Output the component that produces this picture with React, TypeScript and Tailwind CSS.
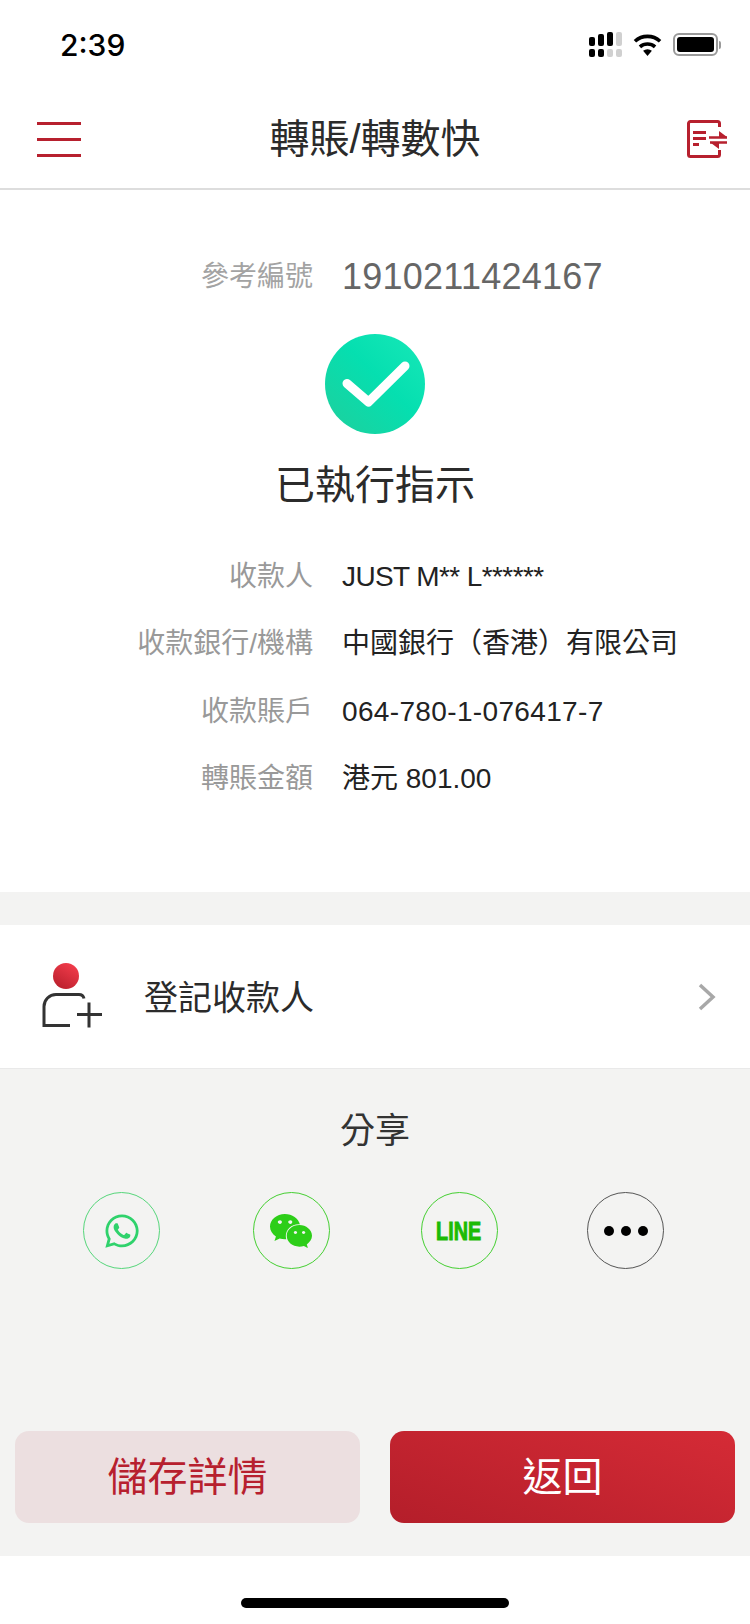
import { FaWhatsapp, FaWeixin } from "react-icons/fa";

const CJK = "font-['Liberation_Sans','Noto_Sans_CJK_TC',sans-serif]";

function Signal() {
  const heights = ["h-[9px]", "h-[12px]", "h-[14px]", "h-[14px]"];
  return (
    <div className="flex h-[25px] w-[33px] flex-col justify-between">
      <div className="flex h-[14px] items-end justify-between">
        {heights.map((h, i) => (
          <span key={i} className={`w-[6px] rounded-[2px] ${h} ${i === 3 ? "bg-[#d0d0d0]" : "bg-black"}`} />
        ))}
      </div>
      <div className="flex h-[8px] justify-between">
        {heights.map((_, i) => (
          <span key={i} className={`h-[8px] w-[6px] rounded-[2px] ${i < 2 ? "bg-black" : "bg-[#d0d0d0]"}`} />
        ))}
      </div>
    </div>
  );
}

function Wifi() {
  return (
    <svg width="31" height="23" viewBox="0 0 31 24">
      <path d="M15.5 24l-4.6-5.4a7 7 0 0 1 9.2 0z" fill="#000" />
      <path d="M7.6 14.4a12 12 0 0 1 15.8 0" fill="none" stroke="#000" strokeWidth="3.8" />
      <path d="M2.4 8.6a19.5 19.5 0 0 1 26.2 0" fill="none" stroke="#000" strokeWidth="3.8" />
    </svg>
  );
}

function Battery() {
  return (
    <div className="flex items-center">
      <div className="flex h-[23px] w-[45px] items-center rounded-[6px] border-2 border-[#9a9a9a] p-[2px]">
        <div className="h-full w-full rounded-[3px] bg-black" />
      </div>
      <div className="ml-[1px] h-[8px] w-[2px] rounded-r-[2px] bg-[#9a9a9a]" />
    </div>
  );
}

function Row({ label, value, tracking }: { label: string; value: string; tracking?: string }) {
  return (
    <div className="flex h-[67.5px] items-center">
      <div className="w-[313px] text-right text-[28px] leading-none text-[#999999]">{label}</div>
      <div className={`ml-[29px] text-[28px] leading-none text-[#222222] ${tracking ?? ""}`}>{value}</div>
    </div>
  );
}

function Circle({ children, border }: { children: React.ReactNode; border: string }) {
  return (
    <div className={`flex h-[77px] w-[77px] items-center justify-center rounded-full border-[1.5px] ${border}`}>
      {children}
    </div>
  );
}

export default function App() {
  return (
    <div className={`flex h-[1624px] w-[750px] flex-col overflow-hidden bg-white ${CJK}`}>
      <div className="flex h-[88px] shrink-0 items-start justify-between pl-[60px] pr-[29px] pt-[27px]">
        <span className="text-[30px] font-medium leading-[36px] text-black [font-family:Inter,sans-serif]">2:39</span>
        <div className="mt-[5px] flex items-center gap-[10px]">
          <Signal />
          <Wifi />
          <Battery />
        </div>
      </div>

      <header className="grid h-[102px] shrink-0 grid-cols-[1fr_auto_1fr] items-center border-b-2 border-[#dddddd] pl-[37px] pr-[23px] pt-[2px]">
        <div className="flex h-[35px] w-[44px] flex-col justify-between">
          <span className="h-[3px] bg-[#b7202e]" />
          <span className="h-[3px] bg-[#b7202e]" />
          <span className="h-[3px] bg-[#b7202e]" />
        </div>
        <h1 className="-translate-x-[7px] text-[40px] font-normal leading-none text-[#2b2b2b]">轉賬/轉數快</h1>
        <svg width="40" height="38" viewBox="0 0 40 38" fill="none" stroke="#b7202e" className="justify-self-end">
          <path d="M32.5 7V3.5A2 2 0 0 0 30.5 1.5H3.5A2 2 0 0 0 1.5 3.5v31a2 2 0 0 0 2 2h27a2 2 0 0 0 2-2V30" strokeWidth="3" />
          <path d="M6 12.5h13M6 18.5h13M6 24.5h6" strokeWidth="3" />
          <path d="M22 17.5h18M23 22.5h17" strokeWidth="2.6" />
          <path d="M32 11l8 6h-8zM32 29l-8-6h8z" fill="#b7202e" stroke="none" />
        </svg>
      </header>

      <main className="flex h-[702px] shrink-0 flex-col">
        <div className="mt-[65px] flex h-[44px] items-center">
          <div className="w-[313px] text-right text-[28px] leading-none text-[#a3a3a3]">參考編號</div>
          <div className="ml-[29px] text-[36px] leading-none tracking-[0.25px] text-[#666666]">1910211424167</div>
        </div>
        <div className="mt-[35px] flex justify-center">
          <div className="h-[100px] w-[100px] rounded-full bg-[linear-gradient(45deg,#1fcf9c,#05dfb0_55%,#18e8b8)]">
            <svg width="100" height="100" viewBox="0 0 100 100" fill="none">
              <path d="M22 49.5L43.5 68L80 32" stroke="#fff" strokeWidth="9" strokeLinecap="round" strokeLinejoin="round" />
            </svg>
          </div>
        </div>
        <div className="mt-[25px] text-center text-[40px] leading-[52px] text-[#2b2b2b]">已執行指示</div>
        <div className="mt-[32px] flex flex-col">
          <Row label="收款人" value="JUST M** L******" tracking="tracking-[-0.6px]" />
          <Row label="收款銀行/機構" value="中國銀行（香港）有限公司" />
          <Row label="收款賬戶" value="064-780-1-076417-7" tracking="tracking-[0.35px]" />
          <Row label="轉賬金額" value="港元 801.00" />
        </div>
      </main>

      <div className="h-[33px] shrink-0 bg-[#f3f3f2]" />

      <div className="flex h-[144px] shrink-0 items-center border-b border-[#e9e9e9] pl-[41px] pr-[34px]">
        <svg width="64" height="68" viewBox="0 0 64 68" className="shrink-0" fill="none">
          <defs>
            <linearGradient id="dot" x1="0.8" y1="0" x2="0.2" y2="1">
              <stop offset="0" stopColor="#f43d4c" />
              <stop offset="1" stopColor="#b91f2c" />
            </linearGradient>
          </defs>
          <circle cx="25" cy="13" r="13" fill="url(#dot)" />
          <path d="M43 35.5c-.6-2.6-2-4-5-4H15a12 12 0 0 0-12 12v19h26" stroke="#333" strokeWidth="3" />
          <path d="M36 51.5h25M48 39.5v25" stroke="#333" strokeWidth="3" />
        </svg>
        <div className="ml-[39px] flex-1 pt-[3px] text-[34px] leading-none text-[#2b2b2b]">登記收款人</div>
        <svg width="18" height="28" viewBox="0 0 18 28" fill="none">
          <path d="M2 2l13 12L2 26" stroke="#a8a8a8" strokeWidth="3.5" />
        </svg>
      </div>

      <section className="flex h-[487px] shrink-0 flex-col bg-[#f3f3f2]">
        <div className="mt-[40px] text-center text-[35px] leading-[44px] text-[#333333]">分享</div>
        <div className="mt-[39px] grid grid-cols-[169.5px_168px_166.5px_77px] pl-[83px]">
          <Circle border="border-[#56d67b]">
            <FaWhatsapp size={38} color="#2fd26c" />
          </Circle>
          <Circle border="border-[#45cf32]">
            <FaWeixin size={44} color="#2dce19" />
          </Circle>
          <Circle border="border-[#45cf32]">
            <span className="scale-x-[0.76] text-[26px] font-bold leading-none text-[#1cbb05] [-webkit-text-stroke:1px_#1cbb05] [font-family:'Liberation_Sans',sans-serif]">LINE</span>
          </Circle>
          <Circle border="border-[#555555]">
            <div className="flex gap-[7px]">
              <span className="h-[10px] w-[10px] rounded-full bg-black" />
              <span className="h-[10px] w-[10px] rounded-full bg-black" />
              <span className="h-[10px] w-[10px] rounded-full bg-black" />
            </div>
          </Circle>
        </div>
        <div className="mt-auto mb-[33px] flex gap-[30px] px-[15px]">
          <button className="flex h-[92px] flex-1 items-center justify-center rounded-[14px] bg-[#ecdfe0] text-[40px] leading-none text-[#b7202e]">儲存詳情</button>
          <button className="flex h-[92px] flex-1 items-center justify-center rounded-[14px] bg-[linear-gradient(20deg,#b41e2a,#d52b36)] text-[40px] leading-none text-white">返回</button>
        </div>
      </section>

      <div className="flex flex-1 items-start justify-center pt-[42px]">
        <div className="h-[10px] w-[268px] rounded-full bg-black" />
      </div>
    </div>
  );
}
